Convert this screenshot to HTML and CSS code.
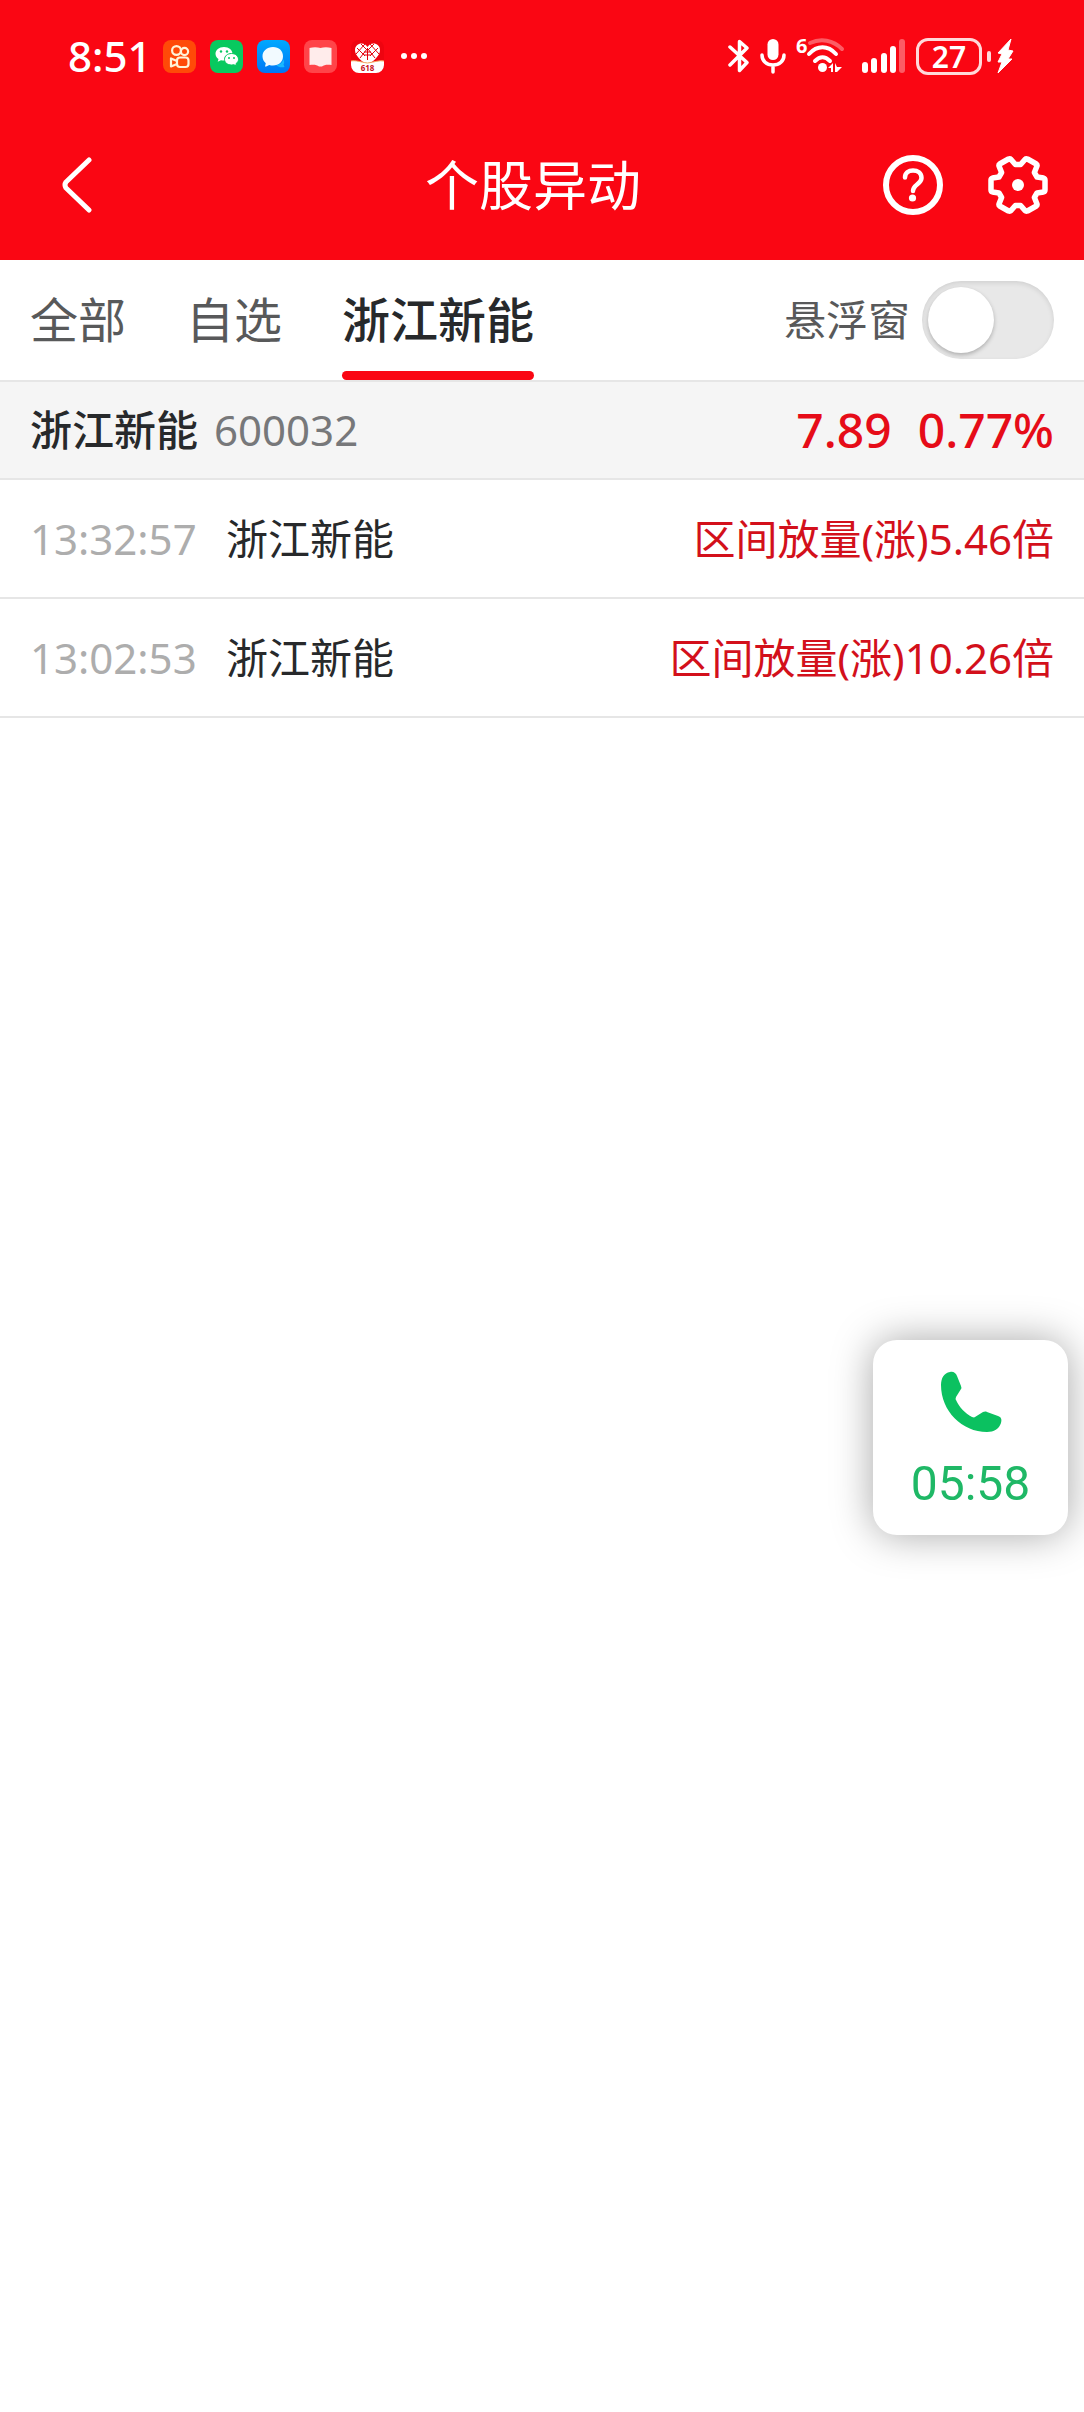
FILE: index.html
```
<!DOCTYPE html>
<html lang="zh-CN">

<head>
    <meta charset="UTF-8">
    <meta name="viewport" content="width=device-width, initial-scale=1.0">
    <title>个股异动</title>

    <link rel="stylesheet" href="styles.css">
</head>

<body>

    <header class="top">
        <!-- Status bar -->
        <div class="status-bar">
            <div class="status-left">
                <span class="clock">8:51</span>
                <svg class="app-icon" viewBox="0 0 33 33">
                    <rect width="33" height="33" rx="8" fill="#ff4a08"/>
                    <g fill="none" stroke="#fff3d8" stroke-width="2.2" stroke-linejoin="round">
                        <circle cx="13.5" cy="10.5" r="4.4"/>
                        <circle cx="21.5" cy="11.5" r="3.6"/>
                        <rect x="14" y="17.5" width="11.5" height="9.5" rx="3"/>
                        <path d="M14 21l-6-2.5v8l6-2.5"/>
                    </g>
                </svg>
                <svg class="app-icon" viewBox="0 0 33 33">
                    <rect width="33" height="33" rx="8" fill="#08c95f"/>
                    <path d="M14 7c-5 0-8.500 3-8.500 6.800 0 2.200 1.200 4 3 5.200l-.8 2.800 3.300-1.600c1 .3 2 .4 3 .4 5 0 8.500-3 8.500-6.800S19 7 14 7z" fill="#fff"/>
                    <path d="M21.500 13.500c-4 0-7 2.500-7 5.800s3 5.700 7 5.700c.8 0 1.600-.1 2.400-.3l2.600 1.400-.6-2.300c1.600-1.100 2.600-2.700 2.600-4.500 0-3.300-3-5.800-7-5.800z" fill="#fff" stroke="#08c95f"/>
                    <g fill="#08c95f">
                        <circle cx="11" cy="11.500" r="1.200"/>
                        <circle cx="17" cy="11.500" r="1.200"/>
                        <circle cx="19" cy="18" r="1"/>
                        <circle cx="24" cy="18" r="1"/>
                    </g>
                </svg>
                <svg class="app-icon" viewBox="0 0 33 33">
                    <defs>
                        <linearGradient id="chat-blue" x1="0" y1="0" x2="0" y2="1">
                            <stop offset="0" stop-color="#00a8ff"/>
                            <stop offset="1" stop-color="#0077f5"/>
                        </linearGradient>
                    </defs>
                    <rect width="33" height="33" rx="8" fill="url(#chat-blue)"/>
                    <path d="M19 25c4 0 7-3 7-6 1.500 2 1.500 4 .5 5.500l1 2.500c-3 .5-6 .5-8.500-2z" fill="#19b8ff"/>
                    <path d="M16 7c-6 0-10.500 4-10.500 9.200 0 3 1.300 5.300 3.300 7l-.8 3.300c1.500 0 3-.6 4.200-1.500 1.200.4 2.500.5 3.800.5 6 0 10-4 10-9.300S22 7 16 7z" fill="#f2faff"/>
                </svg>
                <svg class="app-icon" viewBox="0 0 33 33">
                    <rect width="33" height="33" rx="8" fill="#ff4449"/>
                    <path d="M5.500 8c4-1 8-.8 11 0 3-.8 7-1 11 0v17c-4-.6-7.500-.3-9.500 1.500h-3c-2-1.800-5.500-2.100-9.500-1.500z" fill="#ffeceb"/>
                </svg>
                <svg class="app-icon" viewBox="0 0 33 33">
                    <rect width="33" height="33" rx="8" fill="#ee0410"/>
                    <path d="M16.500 26C10 20 4 16 4 10c0-7 9-9 12.500-3C20 1 29 3 29 10c0 6-6 10-12.500 16z" fill="#fff"/>
                    <path d="M6 8l8 8M10 4l6 6M5 14l9-10M9 18l7-9M27 8l-8 8M23 4l-6 6M28 14L19 4M24 18l-7-9M13 12h7M13 15h7M16.500 8v12" fill="none" stroke="#e3000d"/>
                    <path d="M0 21c5-1 9 1 16.500 2C24 22 28 20 33 21v4a8 8 0 0 1-8 8H8a8 8 0 0 1-8-8z" fill="#fff"/>
                    <path d="M0 21c5-1 9 1 16.500 2C24 22 28 20 33 21" fill="none" stroke="#f3a35a"/>
                    <text class="badge-text" x="16.500" y="31" text-anchor="middle">618</text>
                </svg>
                <svg class="more-icon" viewBox="0 0 28 8">
                    <g fill="#fff">
                        <circle cx="4" cy="4" r="3"/>
                        <circle cx="14" cy="4" r="3"/>
                        <circle cx="24" cy="4" r="3"/>
                    </g>
                </svg>
            </div>
            <div class="status-right">
                <svg width="22" height="36" viewBox="0 0 22 36">
                    <path d="M2 9l17 15.500-7.500 8V3.500l7.500 6.500L2 27" fill="none" stroke="#fff" stroke-width="3.500" stroke-linejoin="round" stroke-linecap="round"/>
                </svg>
                <svg width="26" height="36" viewBox="0 0 26 36">
                    <rect x="7.500" y="1" width="11" height="21" rx="5.500" fill="#fff"/>
                    <path d="M2 17c0 6 4.500 10 11 10s11-4 11-10M13 27v7" fill="none" stroke="#fff" stroke-width="3.500" stroke-linecap="round"/>
                </svg>
                <svg width="50" height="48" viewBox="0 -6 50 48">
                    <text class="wifi-text" x="0" y="15">6</text>
                    <g fill="none" stroke="#fff" stroke-width="4" stroke-linecap="round">
                        <path d="M14 5c11-5 23-3 32 6" opacity=".35"/>
                        <path d="M13 16c8-9 19-9 27 0"/>
                        <path d="M19 23c5-5 10-5 15 0"/>
                    </g>
                    <circle cx="26.500" cy="29.500" r="4.500" fill="#fff"/>
                    <path d="M32 30l5-5v9h-2v-4zM39 25l2 4h5l-5 5h-2z" fill="#fff"/>
                </svg>
                <svg class="signal-icon" width="44" height="36" viewBox="0 0 44 36">
                    <g fill="#fff">
                        <rect x="0" y="24" width="6" height="11" rx="3"/>
                        <rect x="9" y="20" width="6" height="15" rx="3"/>
                        <rect x="19" y="15" width="6" height="20" rx="3"/>
                        <rect x="28" y="8" width="6" height="27" rx="3"/>
                        <rect x="37" y="1" width="6" height="34" rx="3" opacity=".35"/>
                    </g>
                </svg>
                <div class="battery">
                    <span class="battery-level">27</span>
                    <span class="battery-cap"></span>
                    <svg width="18" height="38" viewBox="0 0 18 38">
                        <path d="M15 2L2 16l4 1-4 8h4L2 36l14-14h-4l5-8-5-1z" fill="#fff" stroke="#fff" stroke-linejoin="round"/>
                    </svg>
                </div>
            </div>
        </div>

        <!-- Title bar -->
        <div class="title-bar">
            <button class="icon-button back-button" type="button" aria-label="返回">
                <svg width="30" height="56" viewBox="0 0 30 56">
                    <path d="M27 3L4 25q-2 3 0 6l23 22" fill="none" stroke="#fff" stroke-width="5" stroke-linecap="round"/>
                </svg>
            </button>
            <h1 class="page-title">个股异动</h1>
            <div class="title-actions">
                <button class="icon-button" type="button" aria-label="帮助">
                    <svg width="60" height="60" viewBox="0 0 60 60">
                        <g fill="none" stroke="#fff" stroke-linecap="round">
                            <circle cx="30" cy="30" r="27" stroke-width="6"/>
                            <path d="M22 22.500c0-4.500 3.500-7 8-7s8.500 2.500 8.500 7.500c0 6-8.500 6.500-8.500 13" stroke-width="4.500"/>
                        </g>
                        <circle cx="29.500" cy="43" r="3.600" fill="#fff"/>
                    </svg>
                </button>
                <button class="icon-button" type="button" aria-label="设置">
                    <svg width="60" height="60" viewBox="-30 -30 60 60">
                        <path d="M19-8L25.500-7Q27-6.500 27-5V5Q27 6.500 25.500 7L19 8 16.400 12.500 19 19Q19.300 20.300 18.300 21L9.500 26Q8 26.500 7 25.500L2.600 20.500H-2.600L-7 25.500Q-8 26.500-9.500 26L-18.300 21Q-19.300 20.300-19 19L-16.400 12.500-19 8-25.500 7Q-27 6.500-27 5V-5Q-27-6.500-25.500-7L-19-8-16.400-12.500-19-19Q-19.300-20.300-18.300-21L-9.500-26Q-8-26.500-7-25.500L-2.600-20.500H2.600L7-25.500Q8-26.500 9.500-26L18.300-21Q19.300-20.300 19-19L16.400-12.500z" fill="none" stroke="#fff" stroke-width="5.500" stroke-linejoin="round"/>
                        <circle r="6" fill="#fff"/>
                    </svg>
                </button>
            </div>
        </div>
    </header>

    <!-- Tabs -->
    <nav class="tab-bar">
        <button class="tab" type="button">全部</button>
        <button class="tab" type="button">自选</button>
        <button class="tab active" type="button">浙江新能</button>
        <label class="float-label" for="float-window">悬浮窗</label>
        <input class="switch" type="checkbox" id="float-window">
    </nav>

    <main>
        <!-- Current stock -->
        <div class="stock-bar">
            <span class="stock-name">浙江新能</span>
            <span class="stock-code">600032</span>
            <span class="stock-price">7.89</span>
            <span class="stock-change">0.77%</span>
        </div>

        <!-- Event list -->
        <ul class="event-list">
            <li class="event">
                <time class="event-time">13:32:57</time>
                <span class="event-name">浙江新能</span>
                <span class="event-text">区间放量(涨)5.46倍</span>
            </li>
            <li class="event">
                <time class="event-time">13:02:53</time>
                <span class="event-name">浙江新能</span>
                <span class="event-text">区间放量(涨)10.26倍</span>
            </li>
        </ul>
    </main>

    <!-- Floating call window -->
    <button class="call-window" type="button">
        <svg width="62" height="62" viewBox="0 0 62 62">
            <path d="M10 1C4 2 1 7 1 14c0 26 21 47 46 47 7 0 12-3 14-9 1-4 0-6-3-7l-11-4c-2-1-3 0-4 0l-8 5c-1 1-2 0-3 0-7-4-13-10-16-17-1-1 0-2 0-3l5-8c1-1 0-2 0-3L17 5c-1-3-4-5-7-4z" fill="#0bc160"/>
        </svg>
        <span class="call-time">05:58</span>
    </button>

</body>

</html>
```

FILE: styles.css
```
* {
    box-sizing: border-box;
}

body {
    margin: 0;
    background-color: #fff;
    color: #27292b;
    font-family: "Noto Sans", "Noto Sans CJK SC", sans-serif;
    font-size: 42px;
    line-height: 60px;
}

button {
    margin: 0;
    padding: 0;
    border: none;
    background: none;
    color: inherit;
    font: inherit;
    cursor: pointer;
}

svg {
    display: block;
    flex: none;
}

/* Red area with the status bar and title */
.top {
    background-color: #fa0613;
    color: #fff;
}

.status-bar {
    display: flex;
    justify-content: space-between;
    align-items: center;
    height: 112px;
    padding: 0 70px 0 68px;
}

.status-left,
.status-right {
    display: flex;
    align-items: center;
}

.status-left {
    gap: 14px;
}

.status-right {
    gap: 10px;
}

.clock {
    width: 81px;
    font-weight: 500;
}

.app-icon {
    width: 33px;
    height: 33px;
}

.more-icon {
    width: 28px;
    height: 8px;
    margin-left: 2px;
}

.badge-text {
    fill: #c8101c;
    font-size: 8px;
    font-weight: 700;
}

.wifi-text {
    fill: #fff;
    font-size: 20px;
    font-weight: 700;
}

.signal-icon {
    margin-left: 6px;
}

.battery {
    display: flex;
    align-items: center;
    gap: 5px;
}

.battery-level {
    width: 66px;
    height: 37px;
    border: 3px solid #ffd9da;
    border-radius: 12px;
    font-size: 30px;
    font-weight: 600;
    line-height: 31px;
    text-align: center;
}

.battery-cap {
    width: 4px;
    height: 11px;
    border-radius: 2px;
    background-color: #ffd9da;
}

.title-bar {
    display: grid;
    grid-template-columns: 1fr auto 1fr;
    align-items: center;
    height: 148px;
    padding: 0 36px 2px 18px;
}

.icon-button {
    display: flex;
}

.back-button {
    padding: 0 44px;
}

.page-title {
    margin: 0;
    font-size: 54px;
    font-weight: 400;
    line-height: 72px;
}

.title-actions {
    display: flex;
    justify-content: flex-end;
    gap: 45px;
}

/* Tabs and the floating window switch */
.tab-bar {
    display: flex;
    align-items: center;
    height: 122px;
    padding: 0 30px;
    border-bottom: 2px solid #e6e6e6;
}

.tab {
    height: 100%;
    margin-right: 60px;
    border-top: 9px solid transparent;
    border-bottom: 9px solid transparent;
    color: #58595a;
    font-size: 48px;
}

.tab.active {
    position: relative;
    color: #27292b;
    font-weight: 500;
}

.tab.active::after {
    content: "";
    position: absolute;
    left: 0;
    right: 0;
    bottom: -9px;
    height: 9px;
    border-radius: 5px;
    background-color: #fa0613;
}

.float-label {
    margin-left: auto;
    color: #58595a;
}

.switch {
    appearance: none;
    display: flex;
    width: 132px;
    height: 78px;
    margin: 0 0 0 12px;
    padding: 6px;
    border-radius: 39px;
    background-color: #e8e8e8;
    box-shadow: inset 0 2px 5px rgba(0, 0, 0, 0.1);
    cursor: pointer;
}

.switch::before {
    content: "";
    width: 66px;
    height: 66px;
    border-radius: 50%;
    background-color: #fff;
    box-shadow: 0 2px 4px rgba(0, 0, 0, 0.25);
}

.switch:checked {
    justify-content: flex-end;
    background-color: #fa0613;
}

/* Stock summary */
.stock-bar {
    display: flex;
    align-items: center;
    height: 98px;
    padding: 0 30px;
    border-bottom: 2px solid #e6e6e6;
    background-color: #f5f5f5;
}

.stock-name {
    font-weight: 500;
}

.stock-code {
    margin-left: 16px;
    color: #77787a;
}

.stock-price,
.stock-change {
    color: #e60c18;
    font-size: 48px;
    font-weight: 500;
}

.stock-price {
    margin-left: auto;
}

.stock-change {
    margin-left: 26px;
}

/* Event rows */
.event-list {
    margin: 0;
    padding: 0;
    list-style: none;
}

.event {
    display: flex;
    align-items: center;
    height: 119px;
    padding: 0 30px;
    border-bottom: 2px solid #e6e6e6;
}

.event-time {
    width: 166px;
    color: #adadad;
}

.event-name {
    margin-left: 30px;
}

.event-text {
    margin-left: auto;
    color: #d3101b;
}

/* Call window that floats over the page */
.call-window {
    position: fixed;
    top: 1340px;
    right: 16px;
    display: flex;
    flex-direction: column;
    align-items: center;
    gap: 21px;
    width: 195px;
    height: 195px;
    padding-top: 31px;
    border-radius: 24px;
    background-color: #fff;
    box-shadow: 0 0 40px rgba(0, 0, 0, 0.35);
    color: #1fb866;
    font-family: Roboto, sans-serif;
    font-size: 48px;
}
```
